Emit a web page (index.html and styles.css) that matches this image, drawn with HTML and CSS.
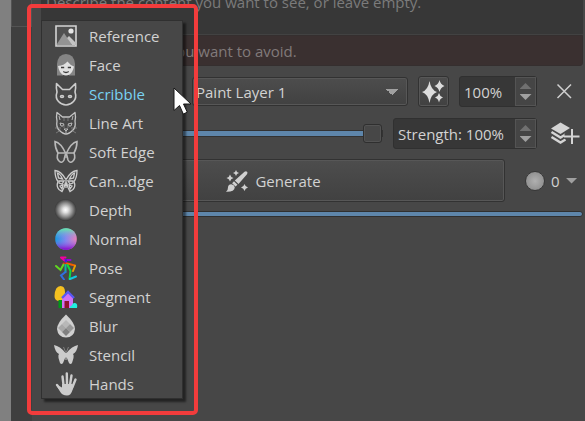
FILE: index.html
```html
<!DOCTYPE html>
<html lang="en">
<head>
<meta charset="utf-8">
<title>Generate</title>
<link rel="stylesheet" href="styles.css">
</head>
<body>
<div class="app">
  <div class="canvas-edge"></div>
  <div class="dock-edge"><div class="dock-tab"></div></div>
  <main class="panel">
    <textarea class="prompt" aria-label="Prompt" placeholder="Describe the content you want to see, or leave empty."></textarea>
    <input class="negative" type="text" aria-label="Negative prompt" placeholder="Describe content you want to avoid.">

    <div class="row layer-row">
      <button class="btn mode" type="button" aria-label="Control mode"></button>
      <select class="btn layer" aria-label="Layer"><option>Paint Layer 1</option></select>
      <button class="btn square" type="button" aria-label="Generate control layer">
        <svg width="26" height="26" viewBox="0 0 26 26" fill="#dcdcdc"><path d="M8.500 2Q10 11 16 13Q10 15 8.500 24Q7 15 1 13Q7 11 8.500 2ZM18.500 1Q19.500 5.500 23.500 7Q19.500 8.500 18.500 13Q17.500 8.500 13.500 7Q17.500 5.500 18.500 1ZM18 14Q18.800 17.500 22 18.500Q18.800 19.500 18 23.500Q17.200 19.500 14 18.500Q17.200 17.500 18 14Z"/></svg>
      </button>
      <div class="spin spin-small">
        <input type="text" value="100%" aria-label="Control strength">
        <div class="steps"><button type="button" class="up" aria-label="Increase"></button><button type="button" class="down" aria-label="Decrease"></button></div>
      </div>
      <button class="tool" type="button" aria-label="Remove">
        <svg width="30" height="26" viewBox="0 0 30 26" fill="none" stroke="#d0d0d0" stroke-width="1.500"><path d="M7.500 5.500l13.500 13.500M21 5.500L7.500 19"/></svg>
      </button>
    </div>

    <div class="row strength-row">
      <input class="slider" type="range" min="0" max="100" value="100" aria-label="Strength">
      <div class="spin spin-wide">
        <input type="text" value="Strength: 100%" aria-label="Strength value">
        <div class="steps"><button type="button" class="up" aria-label="Increase"></button><button type="button" class="down" aria-label="Decrease"></button></div>
      </div>
      <button class="tool" type="button" aria-label="Add control layer">
        <svg width="30" height="26" viewBox="0 0 30 26"><path d="M10.500 1.500l9.500 5.500-9.500 6L1 7.500Z" fill="#d4d4d4"/><path d="M1.500 11l9 5.500 5-3M1.500 16l9 5.500 5-3" fill="none" stroke="#d4d4d4" stroke-width="2.400"/><path d="M22 8v15M14.500 15.500h15" stroke="#474747" stroke-width="5"/><path d="M22 8v15M14 15.500h15.500" stroke="#d4d4d4" stroke-width="2"/></svg>
      </button>
    </div>

    <div class="row generate-row">
      <button class="btn generate" type="button">
        <svg width="24" height="24" viewBox="0 0 24 24" fill="#d0d0d0"><path d="M19.500 2.800q1.500-1 2.500 0t0 2.400L13.500 15l-3.700-3.600ZM9 12.200l3.500 3.500-2 1.800-3.400-3.300ZM6.300 15.200q3 .3 3.500 3Q9.500 23 1 22.700q2-1 1.900-3.700 0-3.500 3.400-3.800ZM11 1q.500 2.500 3 3-2.500.500-3 3-.500-2.500-3-3 2.500-.500 3-3ZM5 5.500Q5.700 8.300 8.500 9 5.700 9.700 5 12.500 4.300 9.700 1.500 9 4.300 8.300 5 5.500ZM19.500 15q.700 2.800 3.500 3.500-2.800.700-3.500 3.500-.700-2.800-3.500-3.500 2.800-.700 3.500-3.500Z"/></svg>
        <span>Generate</span>
      </button>
      <button class="queue" type="button"><span class="dot"></span><span>0</span><span class="arrow"></span></button>
    </div>

    <div class="progress" role="progressbar" aria-label="Progress"></div>
  </main>
</div>

<div class="menu" role="menu">
  <button role="menuitem"><svg viewBox="0 0 24 24"><path d="M2 2h20v20H2Z" fill="#505050" stroke="#d4d4d4" stroke-width="1.600"/><path d="M3 20l7-11 8 12H3Z" fill="#949494"/><path d="M13 14l2-2 6 6v3h-3Z" fill="#c4c4c4"/><circle cx="17" cy="7" r="2.600" fill="#e4e4e4"/></svg>Reference</button>
  <button role="menuitem"><svg viewBox="0 0 24 24"><path d="M3 22.500V11Q4 1 12 1t9 10v11.500H3Z" fill="#858585"/><path d="M9 19h6v4H9Z" fill="#474747"/><path d="M4 13q6-.5 9.500-4.500Q16 12 20 13.500q-.5 3-2 5.500-2.500 3.500-6 3.500T6 19q-1.500-2.500-2-6Z" fill="#e0e0e0"/><path d="M7 14.500h3.200M13.800 14.500H17M9.300 18.500q2.700 2 5.400 0" stroke="#3c3c3c" stroke-width="1.300" fill="none"/></svg>Face</button>
  <button role="menuitem" class="active"><svg viewBox="0 0 24 24" fill="none" stroke="#ccc" stroke-width="1.600" stroke-linejoin="round"><path d="M2.500 1.500Q2 6 3 10 1 16 4.500 19.500 8 23 12 23t7.500-3.500Q23 16 21 10q1-4 .500-8.500L15.500 7.500h-7Z"/><ellipse cx="8" cy="14.500" rx="1.500" ry="1"/><ellipse cx="16" cy="14.500" rx="1.500" ry="1"/></svg>Scribble</button>
  <button role="menuitem"><svg viewBox="0 0 24 24" fill="none" stroke="#c4c4c4" stroke-width="1.300" stroke-linejoin="round"><path d="M3 1.500Q2 6 3 10q-1 6 2 9 4 4 7 4t7-4q3-3 2-9 1-4 0-8.500L15.500 6h-7Z"/><path d="M5 5l1 4M19 5l-1 4M6 12l4 1-1 2H7ZM18 12l-4 1 1 2h2ZM10 18h4l-2 2Zm2 2v2" stroke-width=".9"/><path d="M7 17H1M7 19l-5 3M17 17h6M17 19l5 3M10 7v3M14 7v3M10 14v3M14 14v3" stroke="#8c8c8c" stroke-width=".7"/></svg>Line Art</button>
  <button role="menuitem"><svg viewBox="0 0 24 24" fill="none" stroke="#b8b8b8" stroke-width="1.600"><path d="M11.500 13Q7 3 1 1.500 1 8 4 13q-2 5 1 8 3 3 5-1l1.500-6M12.500 13Q17 3 23 1.500 23 8 20 13q2 5-1 8-3 3-5-1l-1.500-6"/><path d="M4 13h7.500M20 13h-7.500M12 12v6" stroke-width="1.300"/></svg>Soft Edge</button>
  <button role="menuitem"><svg viewBox="0 0 24 24" fill="none" stroke="#ccc" stroke-width="1.300"><path d="M11.500 10Q7 2 1 1.500q0 7 3 11-2 5 1 8l3 2 2-4 1.500-5M12.500 10Q17 2 23 1.500q0 7-3 11 2 5-1 8l-3 2-2-4-1.500-5M12 9v10"/><path d="M3.500 4q3 1 5 6l-4-1ZM20.500 4q-3 1-5 6l4-1ZM5 12l5 0-2 3-3-1ZM19 12h-5l2 3 3-1ZM6 17l3-1-1 4ZM18 17l-3-1 1 4Z"/></svg>Can...dge</button>
  <button role="menuitem"><svg viewBox="0 0 24 24"><defs><radialGradient id="depth"><stop offset="0" stop-color="#fff"/><stop offset=".25" stop-color="#e0e0e0"/><stop offset=".65" stop-color="#8c8c8c"/><stop offset="1" stop-color="#3c3c3c"/></radialGradient></defs><circle cx="11.500" cy="12" r="10.800" fill="url(#depth)"/></svg>Depth</button>
  <button role="menuitem"><svg viewBox="0 0 24 24"><defs><linearGradient id="nx"><stop offset="0" stop-color="#109ce0"/><stop offset=".5" stop-color="#8588ee"/><stop offset="1" stop-color="#f080b4"/></linearGradient><linearGradient id="ny" x1="0" y1="0" x2="0" y2="1"><stop offset="0" stop-color="#60f0a0"/><stop offset=".5" stop-color="#8c8cf0" stop-opacity="0"/><stop offset="1" stop-color="#8c00c8"/></linearGradient></defs><circle cx="12" cy="12" r="10.800" fill="url(#nx)"/><circle cx="12" cy="12" r="10.800" fill="url(#ny)"/></svg>Normal</button>
  <button role="menuitem"><svg viewBox="0 0 24 24" fill="none" stroke-width="2" stroke-linecap="round"><path d="M7 1.500h4.500M7.500 2l3 2.500" stroke="#f000a0"/><path d="M11 4h5.500" stroke="#9a00d8"/><path d="M12 4v3" stroke="#4020d8"/><path d="M12.500 7.500H9.500" stroke="#e02020"/><path d="M9.500 8.500L6.500 14 2 10" stroke="#60d820"/><path d="M13 7.500l8 2" stroke="#f06000"/><path d="M21 10l-2 5" stroke="#e8a000"/><path d="M11.500 9v7" stroke="#10b8a0"/><path d="M11.500 16L7 19.500l3 4" stroke="#3070e0"/><path d="M13.500 9l3 6-1 8" stroke="#10d840"/><path d="M16 23l6-2.500" stroke="#10c8e0"/></svg>Pose</button>
  <button role="menuitem"><svg viewBox="0 0 24 24"><path d="M6.500 1Q11 1 11 7q0 4-1 9H4Q.500 15 .500 11 1 1 6.500 1Z" fill="#f4c020"/><path d="M4.500 15h4v8h-4Z" fill="#009818"/><path d="M9 12l5-5 5 5v11H8v-8Z" fill="#d070f4"/><path d="M8 13l6-6 6 6" fill="none" stroke="#5858f4" stroke-width="2.400"/><path d="M10.500 16h4.500v7h-4.500Z" fill="#901030"/><path d="M16 23q0-3 2-2.500 0-3 3-2.500t2 5Z" fill="#20f0e0"/></svg>Segment</button>
  <button role="menuitem"><svg viewBox="0 0 24 24"><path d="M12 .500Q21 9 21 15q-1 8.500-9 8.500T3 15Q3 9 12 .500Z" fill="#d0d0d0"/><path d="M12 6l4 4-4 4-4-4Z" fill="#b8b8b8"/><path d="M8 10l4 4-4 4-4-4Z" fill="#a8a8a8"/><path d="M16 10l4 4-4 4-4-4Z" fill="#989898"/><path d="M12 14l4 4-4 4-4-4Z" fill="#808080"/></svg>Blur</button>
  <button role="menuitem"><svg viewBox="0 0 24 24" fill="#ccc"><path d="M11.500 10Q6 3 0 2q1 7 5 9-1 1-.500 4L6 20q1.500 2 3 0l2.500-6v3h1v-3l2.500 6q1.500 2 3 0l1.500-5q.500-3-.500-4 4-2 5-9-6 1-11.500 8Z"/><path d="M12 10L9.500 4M12 10l2.500-6" stroke="#999" stroke-width=".7"/></svg>Stencil</button>
  <button role="menuitem"><svg viewBox="0 0 24 24" fill="none" stroke="#ccc" stroke-linecap="round"><path d="M9.500 13L8.500 4.500M13 12l-.200-10.500M16 13l1.500-9.500M18.500 15l3-7.500M8 19l-5-6" stroke-width="2.400"/><path d="M8 12h10.500q1.500 4 0 6-1.500 5.500-5.500 5.500-5 0-7-4l-3-5q2-1 5 1Z" fill="#ccc" stroke="none"/></svg>Hands</button>
</div>

<div class="highlight"></div>
<svg class="cursor" width="20" height="30" viewBox="0 0 20 30"><path d="M1 1v22.500l5.500-5 3.800 8.500 4-1.800-3.800-8.200H18Z" fill="#fff" stroke="#181818"/></svg>
</body>
</html>
```
FILE: styles.css
```css
* { box-sizing: border-box; }

body {
  margin: 0;
  background: #474747;
  color: #d2d2d2;
  font: 15px/20px "Open Sans", "Noto Sans", sans-serif;
  overflow: hidden;
}

button, input, select, textarea {
  font: inherit;
  color: inherit;
  margin: 0;
}

button { cursor: pointer; }

.app { display: flex; min-height: 100vh; }
.canvas-edge { width: 11px; background: #808080; }
.dock-edge { width: 21px; background: #3f3f3f; }
.dock-tab {
  height: 27px;
  border: 1px solid #535353;
  border-top: 0;
  background: #414141;
}

.panel {
  flex: 1;
  min-width: 0;
  display: flex;
  flex-direction: column;
  padding: 0 2px 0 9px;
  margin-top: -12px;
}

.prompt, .negative {
  width: 100%;
  border: 0;
  resize: none;
}
.prompt {
  height: 47px;
  padding: 4px 5px;
  background: #373737;
  border-bottom: 1px solid #424242;
}
.negative {
  height: 31px;
  padding: 4px;
  background: #3a3030;
  border: 1px solid #352f2f;
  border-radius: 0 0 3px 3px;
}
.prompt::placeholder { color: #7b7b7b; opacity: 1; }
.negative::placeholder { color: #817a7a; opacity: 1; }

.row { display: flex; align-items: center; gap: 10px; }
.layer-row { margin-top: 10px; }
.strength-row { margin-top: 11px; }
.generate-row { margin-top: 10px; }

.btn {
  border: 1px solid #323232;
  border-radius: 3px;
  background: linear-gradient(#4d4d4d, #414141);
  box-shadow: inset 0 0 0 1px #575757;
}
.mode { width: 141px; height: 29px; }
.layer {
  flex: 1;
  min-width: 0;
  height: 29px;
  padding: 0 3px;
  appearance: none;
  background:
    linear-gradient(to top right, transparent 50%, #a0a0a0 50%) right 15px center / 6px 6px no-repeat,
    linear-gradient(to top left, transparent 50%, #a0a0a0 50%) right 9px center / 6px 6px no-repeat,
    linear-gradient(#4d4d4d, #414141);
}
.square {
  display: flex;
  align-items: center;
  justify-content: center;
  width: 31px;
  height: 31px;
  padding: 0;
}

.spin {
  display: flex;
  height: 31px;
  border: 1px solid #303030;
  border-radius: 3px;
  background: #373737;
}
.spin-small { width: 78px; }
.spin-wide { width: 144px; }
.spin input {
  flex: 1;
  min-width: 0;
  padding: 0 0 0 4px;
  border: 0;
  background: none;
}
.steps {
  display: flex;
  flex-direction: column;
  align-items: center;
  justify-content: space-evenly;
  width: 21px;
  border: 1px solid #545454;
  background: #454545;
}
.steps button {
  width: 12px;
  height: 6px;
  padding: 0;
  border: 0;
}
.steps .up { background: #707070; clip-path: polygon(50% 0, 100% 100%, 0 100%); }
.steps .down, .arrow { background: #a0a0a0; clip-path: polygon(0 0, 100% 0, 50% 100%); }

.tool {
  width: 36px;
  height: 31px;
  padding: 0;
  border: 0;
  background: none;
}
.tool svg { display: block; margin: 0 auto; }

.slider {
  flex: 1;
  min-width: 0;
  height: 20px;
  appearance: none;
  background: none;
}
.slider::-webkit-slider-runnable-track {
  height: 7px;
  border: 1px solid #333;
  background: #5e86ab;
}
.slider::-webkit-slider-thumb {
  appearance: none;
  width: 19px;
  height: 19px;
  margin-top: -7px;
  border: 1px solid #2f2f2f;
  border-radius: 3px;
  background: #474747;
  box-shadow: inset 0 0 0 1px #535353;
}

.generate {
  flex: 1;
  display: flex;
  align-items: center;
  justify-content: center;
  gap: 6px;
  height: 43px;
}
.queue {
  display: flex;
  align-items: center;
  gap: 6px;
  width: 68px;
  padding: 0 0 0 10px;
  border: 0;
  background: none;
}
.dot {
  width: 20px;
  height: 20px;
  border: 1px solid #383838;
  border-radius: 50%;
  background: radial-gradient(#b0b0b0, #858585);
}
.arrow { width: 12px; height: 6px; }

.progress {
  height: 6px;
  margin-top: 9px;
  border: 1px solid #303030;
  border-radius: 3px;
  background: #5e86ab;
}

.menu {
  position: absolute;
  left: 41px;
  top: 20px;
  width: 142px;
  border: 1px solid #303030;
  background: #474747;
  box-shadow: 3px 3px 2px rgba(0, 0, 0, .5);
}
.menu button {
  display: flex;
  align-items: center;
  gap: 11px;
  width: 100%;
  height: 29px;
  padding: 0 0 0 12px;
  border: 0;
  background: none;
}
.menu svg { width: 24px; height: 24px; }
.menu .active { color: #79d2f2; }

.highlight {
  position: absolute;
  left: 27px;
  top: 4px;
  width: 171px;
  height: 411px;
  border: 4px solid #f23c3c;
  border-radius: 5px;
  pointer-events: none;
}

.cursor {
  position: absolute;
  left: 173px;
  top: 87px;
  pointer-events: none;
}
```
